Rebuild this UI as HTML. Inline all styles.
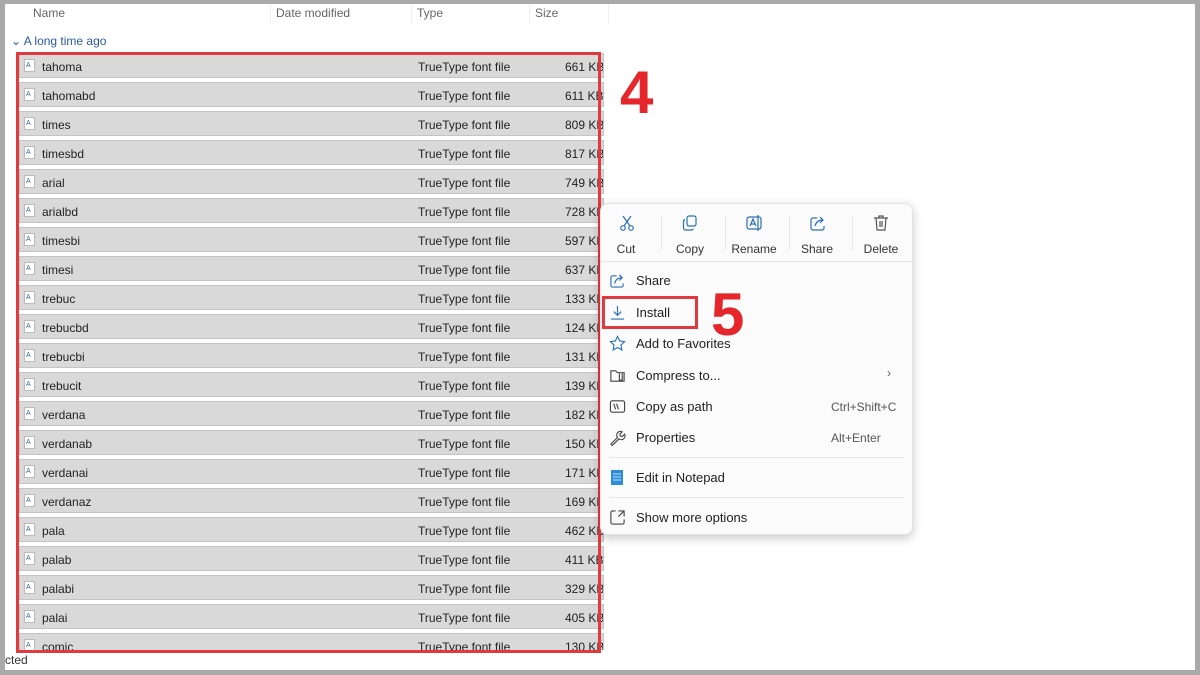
<!DOCTYPE html>
<html><head><meta charset="utf-8"><style>
*{margin:0;padding:0;box-sizing:border-box}
body{width:1200px;height:675px;background:#a9a9a9;position:relative;overflow:hidden;font-family:"Liberation Sans",sans-serif;}
.win{position:absolute;left:5px;top:0;width:1190px;height:670px;background:#fff;overflow:hidden}
.topbar{position:absolute;left:0;top:0;width:1200px;height:4px;background:#a9a9a9}
.hdr{position:absolute;top:6px;font-size:12px;color:#666}
.sep{position:absolute;top:0;width:1px;height:24px;background:#eee}
.row{position:absolute;left:14px;width:585px;height:25px;background:#d9d9d9;border:1px solid #c4c4c4;font-size:12px;color:#222;white-space:nowrap;overflow:hidden}
.row span{position:absolute;top:6px;white-space:nowrap}
.ic{position:absolute;left:4px;top:5px;width:11px;height:13px;background:#fff;border:1px solid #bbb;font-size:7px;color:#3a5fa8;line-height:12px;padding-left:1px}
.red{position:absolute;border:3px solid #e0393e}
.big{position:absolute;color:#e5262b;font-weight:bold;font-size:60px;line-height:1}
.menu{position:absolute;left:600px;top:203px;width:313px;height:332px;background:#fbfbfb;border-radius:8px;box-shadow:0 3px 10px rgba(0,0,0,.22);border:1px solid #e3e3e3}
.tb{position:absolute;top:38px;font-size:12px;color:#333;text-align:center;width:60px}
.mi{position:absolute;left:35px;font-size:13px;color:#222}
.sc{position:absolute;font-size:12px;color:#555}
.hl{position:absolute;left:8px;right:8px;height:1px;background:#e6e6e6}
svg{position:absolute}
</style></head><body>
<div class="win">
<div class="hdr" style="left:28px">Name</div>
<div class="sep" style="left:265px"></div>
<div class="hdr" style="left:271px">Date modified</div>
<div class="sep" style="left:406px"></div>
<div class="hdr" style="left:412px">Type</div>
<div class="sep" style="left:524px"></div>
<div class="hdr" style="left:530px">Size</div>
<div class="sep" style="left:603px"></div>
<div style="position:absolute;left:6px;top:34px;font-size:12px;color:#2a5aa0">⌄ A long time ago</div>
<div style="position:absolute;left:0;top:0;width:600px;height:650px;overflow:hidden" id="list">
<div class="row" style="top:53px"><div class="ic">A</div><span style="left:22px">tahoma</span><span style="left:398px">TrueType font file</span><span style="left:545px">661 KB</span></div>
<div class="row" style="top:82px"><div class="ic">A</div><span style="left:22px">tahomabd</span><span style="left:398px">TrueType font file</span><span style="left:545px">611 KB</span></div>
<div class="row" style="top:111px"><div class="ic">A</div><span style="left:22px">times</span><span style="left:398px">TrueType font file</span><span style="left:545px">809 KB</span></div>
<div class="row" style="top:140px"><div class="ic">A</div><span style="left:22px">timesbd</span><span style="left:398px">TrueType font file</span><span style="left:545px">817 KB</span></div>
<div class="row" style="top:169px"><div class="ic">A</div><span style="left:22px">arial</span><span style="left:398px">TrueType font file</span><span style="left:545px">749 KB</span></div>
<div class="row" style="top:198px"><div class="ic">A</div><span style="left:22px">arialbd</span><span style="left:398px">TrueType font file</span><span style="left:545px">728 KB</span></div>
<div class="row" style="top:227px"><div class="ic">A</div><span style="left:22px">timesbi</span><span style="left:398px">TrueType font file</span><span style="left:545px">597 KB</span></div>
<div class="row" style="top:256px"><div class="ic">A</div><span style="left:22px">timesi</span><span style="left:398px">TrueType font file</span><span style="left:545px">637 KB</span></div>
<div class="row" style="top:285px"><div class="ic">A</div><span style="left:22px">trebuc</span><span style="left:398px">TrueType font file</span><span style="left:545px">133 KB</span></div>
<div class="row" style="top:314px"><div class="ic">A</div><span style="left:22px">trebucbd</span><span style="left:398px">TrueType font file</span><span style="left:545px">124 KB</span></div>
<div class="row" style="top:343px"><div class="ic">A</div><span style="left:22px">trebucbi</span><span style="left:398px">TrueType font file</span><span style="left:545px">131 KB</span></div>
<div class="row" style="top:372px"><div class="ic">A</div><span style="left:22px">trebucit</span><span style="left:398px">TrueType font file</span><span style="left:545px">139 KB</span></div>
<div class="row" style="top:401px"><div class="ic">A</div><span style="left:22px">verdana</span><span style="left:398px">TrueType font file</span><span style="left:545px">182 KB</span></div>
<div class="row" style="top:430px"><div class="ic">A</div><span style="left:22px">verdanab</span><span style="left:398px">TrueType font file</span><span style="left:545px">150 KB</span></div>
<div class="row" style="top:459px"><div class="ic">A</div><span style="left:22px">verdanai</span><span style="left:398px">TrueType font file</span><span style="left:545px">171 KB</span></div>
<div class="row" style="top:488px"><div class="ic">A</div><span style="left:22px">verdanaz</span><span style="left:398px">TrueType font file</span><span style="left:545px">169 KB</span></div>
<div class="row" style="top:517px"><div class="ic">A</div><span style="left:22px">pala</span><span style="left:398px">TrueType font file</span><span style="left:545px">462 KB</span></div>
<div class="row" style="top:546px"><div class="ic">A</div><span style="left:22px">palab</span><span style="left:398px">TrueType font file</span><span style="left:545px">411 KB</span></div>
<div class="row" style="top:575px"><div class="ic">A</div><span style="left:22px">palabi</span><span style="left:398px">TrueType font file</span><span style="left:545px">329 KB</span></div>
<div class="row" style="top:604px"><div class="ic">A</div><span style="left:22px">palai</span><span style="left:398px">TrueType font file</span><span style="left:545px">405 KB</span></div>
<div class="row" style="top:633px"><div class="ic">A</div><span style="left:22px">comic</span><span style="left:398px">TrueType font file</span><span style="left:545px">130 KB</span></div>
</div>
<div style="position:absolute;left:0;top:653px;font-size:12px;color:#333">cted</div>
</div>
<div class="topbar"></div>
<div class="red" style="left:16px;top:52px;width:585px;height:601px"></div>
<div class="big" style="left:620px;top:63px">4</div>
<div class="menu">
<svg style="left:17px;top:10px" width="18" height="18" viewBox="0 0 18 18" fill="none" stroke="#2a6fb5" stroke-width="1.2"><circle cx="5" cy="14" r="2.3"/><circle cx="13" cy="14" r="2.3"/><path d="M6 12L13 2M12 12L5 2"/></svg>
<div class="tb" style="left:-5px">Cut</div>
<svg style="left:80px;top:10px" width="18" height="18" viewBox="0 0 18 18" fill="none" stroke="#2a6fb5" stroke-width="1.2"><rect x="6" y="2" width="9" height="10" rx="2"/><path d="M4 5.5a2 2 0 0 0-1.5 2V14a2 2 0 0 0 2 2h6a2 2 0 0 0 1.8-1.2"/></svg>
<div class="tb" style="left:59px">Copy</div>
<svg style="left:144px;top:10px" width="18" height="18" viewBox="0 0 18 18" fill="none" stroke="#2a6fb5" stroke-width="1.2"><rect x="2" y="3" width="14" height="12" rx="2"/><path d="M5 12l3-7 3 7M6 10h4M13 1v16"/></svg>
<div class="tb" style="left:123px">Rename</div>
<svg style="left:208px;top:10px" width="18" height="18" viewBox="0 0 18 18" fill="none" stroke="#2a6fb5" stroke-width="1.2"><path d="M8 4H4a2 2 0 0 0-2 2v8a2 2 0 0 0 2 2h9a2 2 0 0 0 2-2v-2"/><path d="M6 12c1-4 4-6 8-6M11 3l3 3-3 3"/></svg>
<div class="tb" style="left:186px">Share</div>
<svg style="left:271px;top:10px" width="18" height="18" viewBox="0 0 18 18" fill="none" stroke="#555" stroke-width="1.2"><path d="M2 4h14M7 4V2h4v2M4 4l1 12h8l1-12M8 7v6M10 7v6"/></svg>
<div class="tb" style="left:250px">Delete</div>
<div style="position:absolute;left:60px;top:12px;width:1px;height:34px;background:#e6e6e6"></div>
<div style="position:absolute;left:124px;top:12px;width:1px;height:34px;background:#e6e6e6"></div>
<div style="position:absolute;left:188px;top:12px;width:1px;height:34px;background:#e6e6e6"></div>
<div style="position:absolute;left:251px;top:12px;width:1px;height:34px;background:#e6e6e6"></div>
<div class="hl" style="top:57px;left:0;right:0"></div>
<svg style="left:8px;top:68px" width="17" height="17" viewBox="0 0 18 18" fill="none" stroke="#2a6fb5" stroke-width="1.2"><path d="M8 4H4a2 2 0 0 0-2 2v8a2 2 0 0 0 2 2h9a2 2 0 0 0 2-2v-2"/><path d="M6 12c1-4 4-6 8-6M11 3l3 3-3 3"/></svg>
<div class="mi" style="top:69px">Share</div>
<svg style="left:8px;top:100px" width="17" height="17" viewBox="0 0 18 18" fill="none" stroke="#2a6fb5" stroke-width="1.2"><path d="M9 2v10M5 8l4 4 4-4M2 16h14"/></svg>
<div class="mi" style="top:101px">Install</div>
<svg style="left:8px;top:131px" width="17" height="17" viewBox="0 0 18 18" fill="none" stroke="#2a6fb5" stroke-width="1.2"><path d="M9 1.5l2.3 4.8 5.2.7-3.8 3.6.9 5.2L9 13.3l-4.6 2.5.9-5.2L1.5 7l5.2-.7z"/></svg>
<div class="mi" style="top:132px">Add to Favorites</div>
<svg style="left:8px;top:163px" width="17" height="17" viewBox="0 0 18 18" fill="none" stroke="#444" stroke-width="1.2"><path d="M2 4h5l2 2h7v9H2zM11 7v7h3V7"/></svg>
<div class="mi" style="top:164px">Compress to...</div>
<div class="sc" style="left:286px;top:162px">›</div>
<svg style="left:8px;top:194px" width="17" height="17" viewBox="0 0 18 18" fill="none" stroke="#444" stroke-width="1.2"><rect x="1.5" y="3" width="15" height="12" rx="2"/><path d="M5 6l2 6M8 6l2 6"/></svg>
<div class="mi" style="top:195px">Copy as path</div>
<div class="sc" style="left:230px;top:196px">Ctrl+Shift+C</div>
<svg style="left:8px;top:225px" width="17" height="17" viewBox="0 0 18 18" fill="none" stroke="#444" stroke-width="1.2"><path d="M2 16l7-7a4 4 0 0 1 5-6l-2.5 2.5.5 2 2 .5L16.5 5.5a4 4 0 0 1-6 5L3.5 17.5z"/></svg>
<div class="mi" style="top:226px">Properties</div>
<div class="sc" style="left:230px;top:227px">Alt+Enter</div>
<div class="hl" style="top:253px"></div>
<svg style="left:9px;top:265px" width="15" height="17" viewBox="0 0 15 17"><rect x="1" y="1" width="12" height="15" fill="#2d8dd8"/><path d="M3 5h8M3 8h8M3 11h8" stroke="#bfe1f8"/></svg>
<div class="mi" style="top:266px">Edit in Notepad</div>
<div class="hl" style="top:293px"></div>
<svg style="left:8px;top:305px" width="17" height="17" viewBox="0 0 18 18" fill="none" stroke="#444" stroke-width="1.2"><path d="M7 2H4a2 2 0 0 0-2 2v10a2 2 0 0 0 2 2h10a2 2 0 0 0 2-2v-3M10 2h6v6M16 2l-6 6"/></svg>
<div class="mi" style="top:306px">Show more options</div>
</div>
<div class="red" style="left:602px;top:296px;width:96px;height:33px"></div>
<div class="big" style="left:711px;top:285px">5</div>
</body></html>
